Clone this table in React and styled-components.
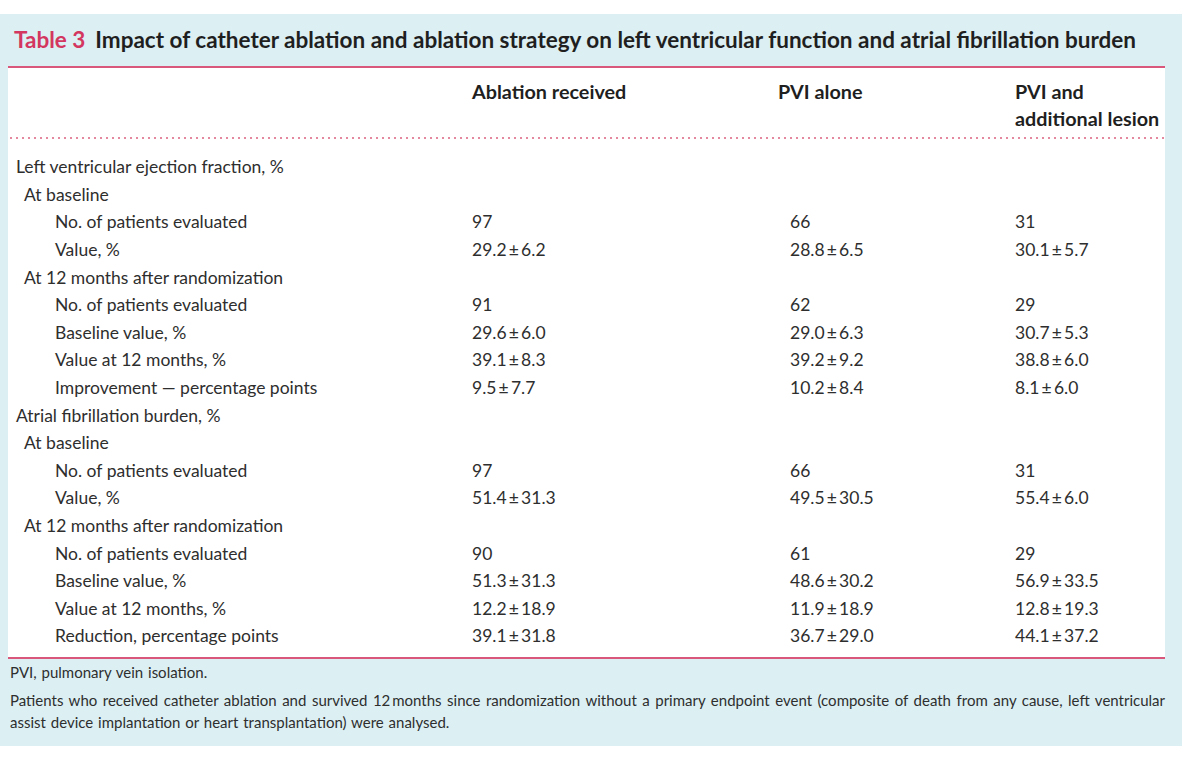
import React from 'react';
import styled, { createGlobalStyle } from 'styled-components';

const GlobalStyle = createGlobalStyle`
    html, body {
        margin: 0;
        padding: 0;
        background: #ffffff;
    }
    body {
        font-family: 'Lato', 'Open Sans', sans-serif;
        color: #2e2e2e;
    }
`;

const Page = styled.div`
    width: 1200px;
    height: 758px;
    padding-top: 14px;
    box-sizing: border-box;
`;

const Panel = styled.div`
    width: 1182px;
    height: 732px;
    background: #dcf0f4;
    box-sizing: border-box;
    padding-bottom: 13px;
`;

const Caption = styled.div`
    font-size: 22.5px;
    font-weight: 700;
    line-height: 26px;
    padding: 13px 0 13px 14px;
    color: #1f1f1f;
    white-space: nowrap;
`;

const Label = styled.span`
    color: #d3365f;
    margin-right: 10px;
`;

const Card = styled.div`
    background: #ffffff;
    margin: 0 17px 0 8px;
    border-top: 2px solid #d9577a;
    border-bottom: 2px solid #d9577a;
`;

const Grid = styled.div`
    display: grid;
    grid-template-columns: 464px 318px 225px 1fr;
`;

const Head = styled(Grid)`
    padding: 10px 0 7px;
    font-size: 19.8px;
    font-weight: 700;
    line-height: 27px;
    color: #1f1f1f;
    background-image: radial-gradient(circle, #e3889f 0.9px, transparent 1.2px);
    background-size: 6px 2px;
    background-repeat: repeat-x;
    background-position: 0 100%;
`;

const HeadCell = styled.div`
    margin-left: ${p => p.$shift || 0}px;
    white-space: nowrap;
`;

const Body = styled.div`
    padding: 14px 0 7px;
    font-size: 17.5px;
`;

const Row = styled(Grid)`
    height: 27.6px;
    align-items: center;
`;

const Cell = styled.div`
    padding-left: ${p => p.$indent || 0}px;
    white-space: nowrap;
`;

const Notes = styled.div`
    padding: 2px 17px 0 10px;
    font-size: 15px;
    line-height: 22px;
    word-spacing: 1px;
    text-align: justify;
    color: #2e2e2e;
`;

const Note = styled.p`
    margin: 0 0 6px;
`;

const pm = (a, b) => `${a}\u2009±\u2009${b}`;

const indents = [8, 16, 47];

const rows = [
    [0, 'Left ventricular ejection fraction, %'],
    [1, 'At baseline'],
    [2, 'No. of patients evaluated', '97', '66', '31'],
    [2, 'Value, %', pm('29.2', '6.2'), pm('28.8', '6.5'), pm('30.1', '5.7')],
    [1, 'At 12 months after randomization'],
    [2, 'No. of patients evaluated', '91', '62', '29'],
    [2, 'Baseline value, %', pm('29.6', '6.0'), pm('29.0', '6.3'), pm('30.7', '5.3')],
    [2, 'Value at 12 months, %', pm('39.1', '8.3'), pm('39.2', '9.2'), pm('38.8', '6.0')],
    [2, 'Improvement \u2014 percentage points', pm('9.5', '7.7'), pm('10.2', '8.4'), pm('8.1', '6.0')],
    [0, 'Atrial fibrillation burden, %'],
    [1, 'At baseline'],
    [2, 'No. of patients evaluated', '97', '66', '31'],
    [2, 'Value, %', pm('51.4', '31.3'), pm('49.5', '30.5'), pm('55.4', '6.0')],
    [1, 'At 12 months after randomization'],
    [2, 'No. of patients evaluated', '90', '61', '29'],
    [2, 'Baseline value, %', pm('51.3', '31.3'), pm('48.6', '30.2'), pm('56.9', '33.5')],
    [2, 'Value at 12 months, %', pm('12.2', '18.9'), pm('11.9', '18.9'), pm('12.8', '19.3')],
    [2, 'Reduction, percentage points', pm('39.1', '31.8'), pm('36.7', '29.0'), pm('44.1', '37.2')],
];

const App = () => {
    return (
        <Page>
            <GlobalStyle />
            <Panel>
                <Caption>
                    <Label>Table 3</Label>
                    Impact of catheter ablation and ablation strategy on left ventricular function and atrial fibrillation burden
                </Caption>
                <Card>
                    <Head>
                        <HeadCell />
                        <HeadCell>Ablation received</HeadCell>
                        <HeadCell $shift={-12}>PVI alone</HeadCell>
                        <HeadCell>PVI and<br />additional lesion</HeadCell>
                    </Head>
                    <Body>
                        {rows.map(([level, label, a, b, c], i) => (
                            <Row key={i}>
                                <Cell $indent={indents[level]}>{label}</Cell>
                                <Cell>{a}</Cell>
                                <Cell>{b}</Cell>
                                <Cell>{c}</Cell>
                            </Row>
                        ))}
                    </Body>
                </Card>
                <Notes>
                    <Note>PVI, pulmonary vein isolation.</Note>
                    <Note>
                        Patients who received catheter ablation and survived 12{'\u2009'}months since randomization without a primary endpoint event (composite of death from any cause, left ventricular assist device implantation or heart transplantation) were analysed.
                    </Note>
                </Notes>
            </Panel>
        </Page>
    );
};

export default App;
